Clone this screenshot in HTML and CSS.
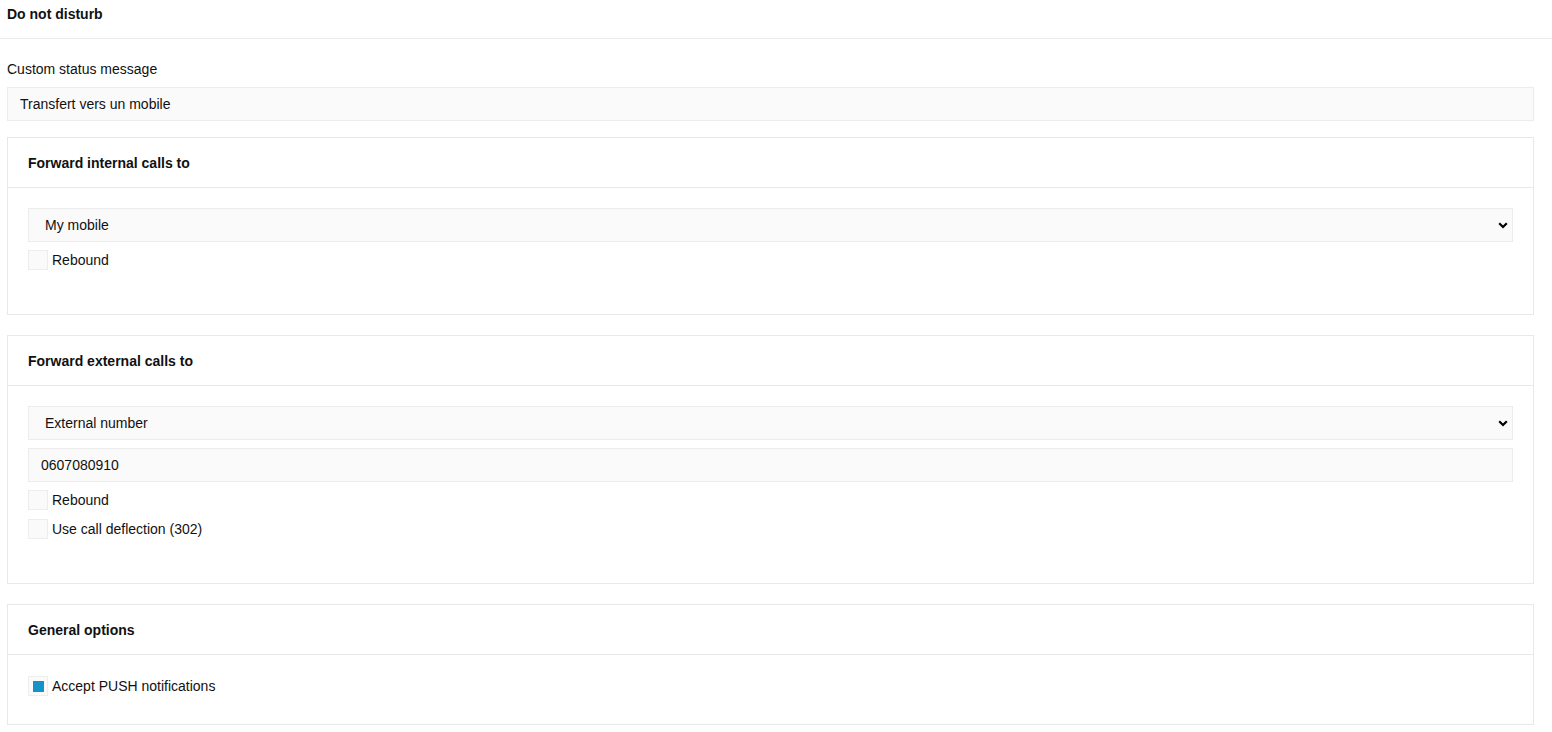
FILE: index.html
```html
<html>
    <head>
        <title>Do not disturb</title>
        <link rel="stylesheet" href="styles.css">
    </head>
    <body>
        <div class="topbar">Do not disturb</div>

        <div class="content">
            <label class="field-label">Custom status message</label>
            <input type="text" class="text-input status-input" value="Transfert vers un mobile" />

            <!-- internal calls -->
            <div class="panel">
                <div class="panel-head">Forward internal calls to</div>
                <div class="panel-body tall">
                    <div class="select-wrap">
                        <select class="select">
                            <option>My mobile</option>
                            <option>External number</option>
                            <option>Voicemail</option>
                        </select>
                        <svg class="chevron" width="10" height="7" viewBox="0 0 10 7"><path d="M1.2 1.2 L5 5 L8.8 1.2" fill="none" stroke="#000" stroke-width="2.2"/></svg>
                    </div>
                    <label class="check"><span class="box"></span>Rebound</label>
                </div>
            </div>

            <!-- external calls -->
            <div class="panel">
                <div class="panel-head">Forward external calls to</div>
                <div class="panel-body tall">
                    <div class="select-wrap">
                        <select class="select">
                            <option>External number</option>
                            <option>My mobile</option>
                            <option>Voicemail</option>
                        </select>
                        <svg class="chevron" width="10" height="7" viewBox="0 0 10 7"><path d="M1.2 1.2 L5 5 L8.8 1.2" fill="none" stroke="#000" stroke-width="2.2"/></svg>
                    </div>
                    <input type="text" class="text-input number-input" value="0607080910" />
                    <label class="check"><span class="box"></span>Rebound</label>
                    <label class="check"><span class="box"></span>Use call deflection (302)</label>
                </div>
            </div>

            <!-- options -->
            <div class="panel">
                <div class="panel-head">General options</div>
                <div class="panel-body options">
                    <label class="check"><span class="box checked"></span>Accept PUSH notifications</label>
                </div>
            </div>
        </div>
    </body>
</html>
```

FILE: styles.css
```css
body{
    margin: 0;
    background: #fff;
    color: #111;
    font-family: "Liberation Sans", Arial, sans-serif;
    font-size: 14px;
}

.topbar{
    height: 38px;
    line-height: 29px;
    padding-left: 7px;
    font-weight: bold;
    border-bottom: 1px solid #ebebeb;
}

.content{
    padding: 22px 18px 0 7px;
}

.field-label{
    display: block;
    line-height: 17px;
    margin-bottom: 9px;
}

.text-input{
    display: block;
    width: 100%;
    box-sizing: border-box;
    height: 34px;
    border: 1px solid #ececec;
    background: #fafafa;
    font-family: inherit;
    font-size: 14px;
    color: #111;
    padding: 0 12px;
    outline: none;
}

.status-input{
    margin-bottom: 16px;
}

.number-input{
    margin-bottom: 8px;
}

.panel{
    border: 1px solid #e8e8e8;
    margin-bottom: 20px;
}

.panel-head{
    height: 49px;
    line-height: 50px;
    padding-left: 20px;
    font-weight: bold;
    border-bottom: 1px solid #e8e8e8;
}

.panel-body{
    padding: 20px 20px 28px 20px;
}

.panel-body.tall{
    padding-bottom: 44px;
}

.panel-body.options{
    padding-top: 21px;
}

.select-wrap{
    position: relative;
    margin-bottom: 8px;
}

.select{
    display: block;
    width: 100%;
    height: 34px;
    -webkit-appearance: none;
    appearance: none;
    border: 1px solid #ececec;
    background: #fafafa;
    font-family: inherit;
    font-size: 14px;
    color: #111;
    padding: 0 16px;
    outline: none;
    border-radius: 0;
}

.chevron{
    position: absolute;
    right: 5px;
    top: 14px;
}

.check{
    display: flex;
    align-items: center;
    height: 20px;
    gap: 4px;
}

.check + .check{
    margin-top: 9px;
}

.check .box{
    width: 18px;
    height: 18px;
    border: 1px solid #ededed;
    background: #fafafa;
    display: flex;
    align-items: center;
    justify-content: center;
}

.check .box.checked::after{
    content: "";
    width: 11px;
    height: 11px;
    background: #1592c8;
}
```
